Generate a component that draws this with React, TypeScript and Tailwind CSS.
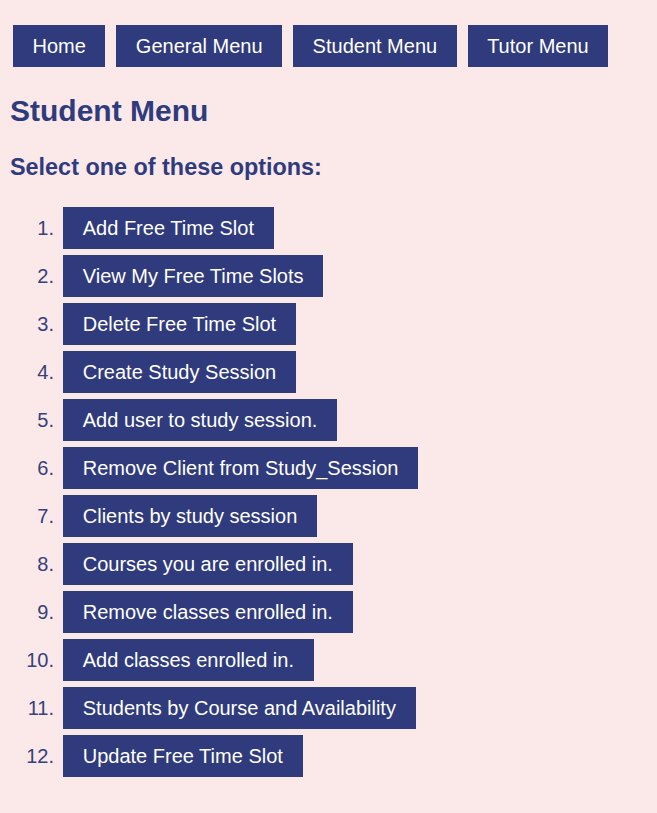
import React from "react";

const nav = ["Home", "General Menu", "Student Menu", "Tutor Menu"];
const items = [
  "Add Free Time Slot",
  "View My Free Time Slots",
  "Delete Free Time Slot",
  "Create Study Session",
  "Add user to study session.",
  "Remove Client from Study_Session",
  "Clients by study session",
  "Courses you are enrolled in.",
  "Remove classes enrolled in.",
  "Add classes enrolled in.",
  "Students by Course and Availability",
  "Update Free Time Slot",
];

export default function App() {
  return (
    <div
      className="min-h-[813px] w-full bg-[#fbe9ea] text-[#2f3b7c]"
      style={{ fontFamily: '"Liberation Sans", Arial, sans-serif' }}
    >
      <nav className="flex gap-[11px] pl-[13px] pt-[25px]">
        {nav.map((n) => (
          <a
            key={n}
            className="flex h-[42px] items-center bg-[#2f3b7c] px-[19.5px] text-[20px] text-white"
          >
            {n}
          </a>
        ))}
      </nav>
      <h2 className="ml-[10px] mt-[27px] text-[30px] font-bold leading-[34px]">
        Student Menu
      </h2>
      <h3 className="ml-[10px] mt-[26px] text-[23.4px] font-bold leading-[27px]">
        Select one of these options:
      </h3>
      <ol className="mt-[26px] flex flex-col gap-[6px]">
        {items.map((t, i) => (
          <li key={t} className="flex items-center">
            <span className="w-[55px] pr-[1px] text-right text-[20px] text-[#36407a]">
              {i + 1}.
            </span>
            <button className="ml-[8px] flex h-[42px] items-center bg-[#2f3b7c] px-[19.75px] text-[20px] text-white">
              {t}
            </button>
          </li>
        ))}
      </ol>
    </div>
  );
}
